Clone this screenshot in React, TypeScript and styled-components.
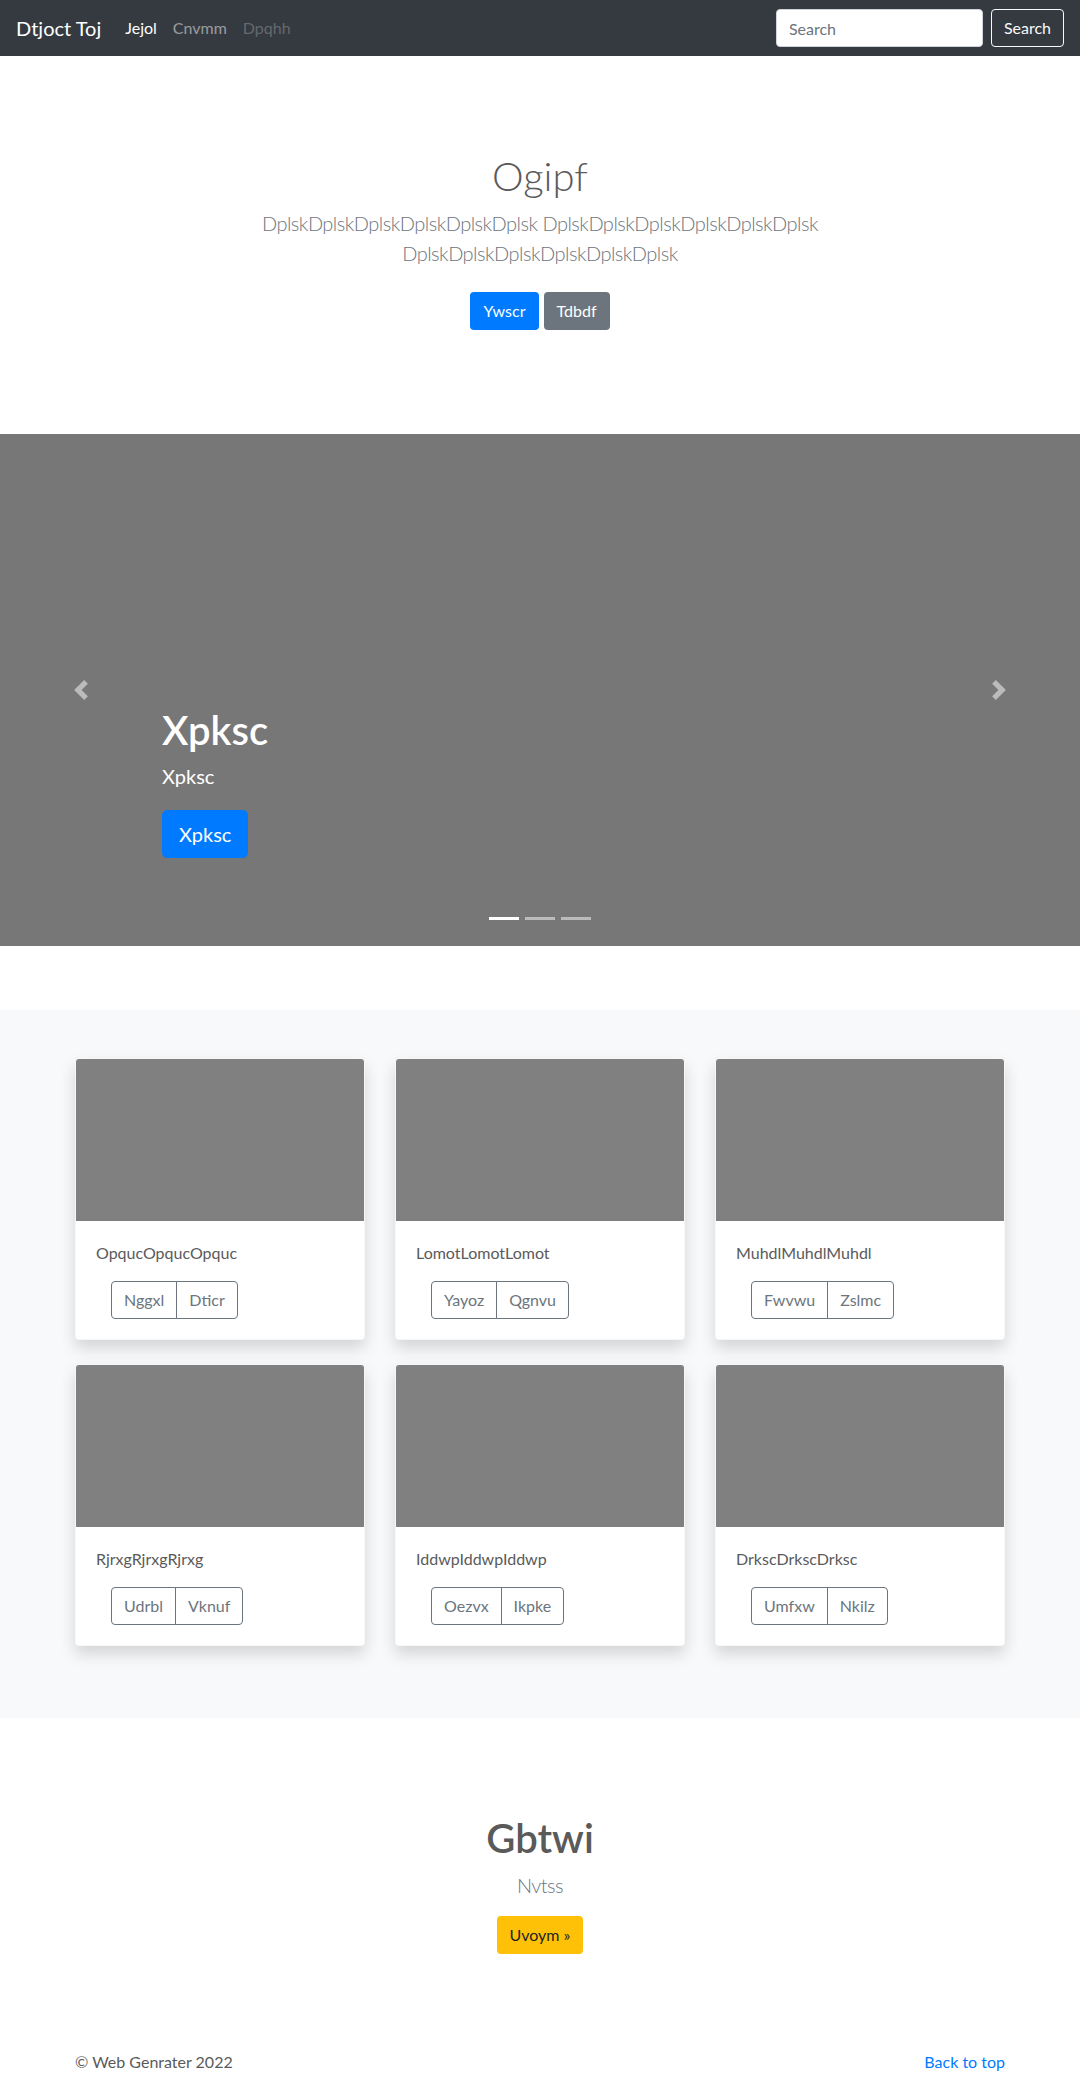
import React from 'react';
import styled, { createGlobalStyle } from 'styled-components';

const GlobalStyle = createGlobalStyle`
  * { box-sizing: border-box; }
  body {
    margin: 0;
    font-family: Lato, "Liberation Sans", sans-serif;
    font-size: 16px;
    line-height: 1.5;
    color: #5a5a5a;
    background: #fff;
  }
  p { margin: 0; }
  h1 { margin: 0; }
`;

const Navbar = styled.nav`
  display: flex;
  align-items: center;
  height: 56px;
  padding: 8px 16px;
  background-color: #343a40;
`;

const Brand = styled.a`
  font-size: 20px;
  line-height: 30px;
  padding: 5px 0;
  margin-right: 16px;
  color: #fff;
  text-decoration: none;
`;

const NavList = styled.ul`
  display: flex;
  list-style: none;
  margin: 0;
  padding: 0;
  flex: 1;
`;

const NavLink = styled.a<{ $state?: 'active' | 'disabled' }>`
  display: block;
  padding: 8px;
  text-decoration: none;
  color: ${p => p.$state === 'active' ? '#fff' : p.$state === 'disabled' ? 'rgba(255,255,255,.25)' : 'rgba(255,255,255,.5)'};
`;

const SearchForm = styled.form`
  display: flex;
  align-items: center;
  gap: 8px;
`;

const SearchInput = styled.input`
  width: 207px;
  height: 38px;
  padding: 6px 12px;
  font-family: inherit;
  font-size: 16px;
  color: #495057;
  border: 1px solid #ced4da;
  border-radius: 4px;
  background: #fff;
  &::placeholder { color: #6c757d; }
`;

const OutlineLightButton = styled.button`
  height: 38px;
  padding: 6px 12px;
  font-family: inherit;
  font-size: 16px;
  line-height: 24px;
  color: #f8f9fa;
  background: transparent;
  border: 1px solid #f8f9fa;
  border-radius: 4px;
`;

const Jumbotron = styled.section`
  padding: 96px 15px;
  text-align: center;
  background: #fff;
`;

const JumboInner = styled.div`
  max-width: 640px;
  margin: 0 auto;
  padding: 0 15px;
`;

const JumboHeading = styled.h1<{ $bold?: boolean }>`
  font-size: 40px;
  line-height: 48px;
  font-weight: ${p => p.$bold ? 600 : 300};
  margin-bottom: 8px;
  color: #5a5a5a;
`;

const Lead = styled.p`
  font-size: 20px;
  line-height: 30px;
  font-weight: 300;
  letter-spacing: -0.5px;
  color: #6c757d;
  margin-bottom: 16px;
`;

const ButtonRow = styled.p`
  display: flex;
  justify-content: center;
  gap: 5px;
`;

const Btn = styled.a<{ $variant: 'primary' | 'secondary' | 'warning'; $spaced?: boolean }>`
  display: inline-block;
  padding: 6px 12px;
  margin: ${p => p.$spaced ? '8px 0' : '0'};
  font-size: 16px;
  line-height: 24px;
  border-radius: 4px;
  text-decoration: none;
  border: 1px solid transparent;
  color: ${p => p.$variant === 'warning' ? '#212529' : '#fff'};
  background-color: ${p => p.$variant === 'primary' ? '#007bff' : p.$variant === 'secondary' ? '#6c757d' : '#ffc107'};
`;

const Carousel = styled.div`
  position: relative;
  height: 512px;
  margin-bottom: 64px;
  background: #777;
`;

const Caption = styled.div`
  position: absolute;
  left: 15%;
  right: 15%;
  bottom: 48px;
  padding: 20px 0;
  color: #fff;
  text-align: left;
  z-index: 10;
`;

const CaptionTitle = styled.h1`
  font-size: 40px;
  line-height: 48px;
  font-weight: 600;
  margin-bottom: 8px;
`;

const CaptionText = styled.p`
  font-size: 20px;
  line-height: 28px;
  margin-bottom: 20px;
`;

const LargeButton = styled.a`
  display: inline-block;
  padding: 8px 16px;
  font-size: 20px;
  line-height: 30px;
  color: #fff;
  background: #007bff;
  border: 1px solid #007bff;
  border-radius: 5px;
  text-decoration: none;
`;

const Control = styled.a<{ $side: 'left' | 'right' }>`
  position: absolute;
  top: 0;
  bottom: 0;
  ${p => p.$side}: 0;
  width: 15%;
  display: flex;
  align-items: center;
  justify-content: center;
  opacity: 0.5;
  z-index: 1;
  svg { width: 20px; height: 20px; }
`;

const Indicators = styled.ol`
  position: absolute;
  left: 0;
  right: 0;
  bottom: 0;
  display: flex;
  justify-content: center;
  margin: 0 15% 16px;
  padding: 0;
  list-style: none;
  z-index: 15;
`;

const Indicator = styled.li<{ $active?: boolean }>`
  width: 30px;
  height: 3px;
  margin: 10px 3px;
  background: #fff;
  opacity: ${p => p.$active ? 1 : 0.5};
`;

const Album = styled.div`
  padding: 48px 0 72px;
  background-color: #f8f9fa;
`;

const Container = styled.div`
  max-width: 960px;
  margin: 0 auto;
  padding: 0 15px;
`;

const CardGrid = styled.div`
  display: grid;
  grid-template-columns: repeat(3, 1fr);
  column-gap: 30px;
  row-gap: 24px;
`;

const Card = styled.div`
  background: #fff;
  border: 1px solid rgba(0, 0, 0, 0.03);
  border-radius: 4px;
  overflow: hidden;
  box-shadow: 0 8px 16px rgba(0, 0, 0, 0.15);
`;

const CardImage = styled.div`
  height: 162px;
  background: #808080;
`;

const CardBody = styled.div`
  padding: 20px;
`;

const CardText = styled.p`
  margin-bottom: 16px;
`;

const BtnGroup = styled.div`
  display: inline-flex;
  margin-left: 15px;
`;

const OutlineBtn = styled.button`
  padding: 6px 12px;
  font-family: inherit;
  font-size: 16px;
  line-height: 24px;
  color: #6c757d;
  background: transparent;
  border: 1px solid #6c757d;
  &:first-child { border-radius: 4px 0 0 4px; }
  &:last-child { border-radius: 0 4px 4px 0; margin-left: -1px; }
`;

const Footer = styled.footer`
  display: flex;
  justify-content: space-between;
  max-width: 960px;
  margin: 0 auto;
  padding: 0 15px;
  line-height: 24px;
  color: #5a5a5a;
`;

const FooterLink = styled.a`
  color: #007bff;
  text-decoration: none;
`;

const cards = [
  { text: 'OpqucOpqucOpquc', a: 'Nggxl', b: 'Dticr' },
  { text: 'LomotLomotLomot', a: 'Yayoz', b: 'Qgnvu' },
  { text: 'MuhdlMuhdlMuhdl', a: 'Fwvwu', b: 'Zslmc' },
  { text: 'RjrxgRjrxgRjrxg', a: 'Udrbl', b: 'Vknuf' },
  { text: 'IddwpIddwpIddwp', a: 'Oezvx', b: 'Ikpke' },
  { text: 'DrkscDrkscDrksc', a: 'Umfxw', b: 'Nkilz' },
];

function ChevronLeft() {
  return (
    <svg viewBox="0 0 8 8" fill="#fff">
      <path d="M5.25 0l-4 4 4 4 1.5-1.5L4.25 4l2.5-2.5L5.25 0z" />
    </svg>
  );
}

function ChevronRight() {
  return (
    <svg viewBox="0 0 8 8" fill="#fff">
      <path d="M2.75 0l-1.5 1.5L3.75 4l-2.5 2.5L2.75 8l4-4-4-4z" />
    </svg>
  );
}

export default function App() {
  return (
    <>
      <GlobalStyle />
      <Navbar>
        <Brand href="#">Dtjoct Toj</Brand>
        <NavList>
          <li><NavLink $state="active" href="#">Jejol</NavLink></li>
          <li><NavLink href="#">Cnvmm</NavLink></li>
          <li><NavLink $state="disabled" href="#">Dpqhh</NavLink></li>
        </NavList>
        <SearchForm onSubmit={e => e.preventDefault()}>
          <SearchInput type="search" placeholder="Search" />
          <OutlineLightButton type="submit">Search</OutlineLightButton>
        </SearchForm>
      </Navbar>

      <Jumbotron>
        <JumboInner>
          <JumboHeading>Ogipf</JumboHeading>
          <Lead>
            DplskDplskDplskDplskDplskDplsk DplskDplskDplskDplskDplskDplsk DplskDplskDplskDplskDplskDplsk
          </Lead>
          <ButtonRow>
            <Btn $variant="primary" $spaced href="#">Ywscr</Btn>
            <Btn $variant="secondary" $spaced href="#">Tdbdf</Btn>
          </ButtonRow>
        </JumboInner>
      </Jumbotron>

      <Carousel>
        <Control $side="left" href="#"><ChevronLeft /></Control>
        <Caption>
          <CaptionTitle>Xpksc</CaptionTitle>
          <CaptionText>Xpksc</CaptionText>
          <CaptionText><LargeButton href="#">Xpksc</LargeButton></CaptionText>
        </Caption>
        <Control $side="right" href="#"><ChevronRight /></Control>
        <Indicators>
          <Indicator $active />
          <Indicator />
          <Indicator />
        </Indicators>
      </Carousel>

      <Album>
        <Container>
          <CardGrid>
            {cards.map(c => (
              <Card key={c.text}>
                <CardImage />
                <CardBody>
                  <CardText>{c.text}</CardText>
                  <BtnGroup>
                    <OutlineBtn>{c.a}</OutlineBtn>
                    <OutlineBtn>{c.b}</OutlineBtn>
                  </BtnGroup>
                </CardBody>
              </Card>
            ))}
          </CardGrid>
        </Container>
      </Album>

      <Jumbotron>
        <JumboInner>
          <JumboHeading $bold>Gbtwi</JumboHeading>
          <Lead>Nvtss</Lead>
          <ButtonRow>
            <Btn $variant="warning" href="#">Uvoym »</Btn>
          </ButtonRow>
        </JumboInner>
      </Jumbotron>

      <Footer>
        <p>© Web Genrater 2022</p>
        <FooterLink href="#">Back to top</FooterLink>
      </Footer>
    </>
  );
}
